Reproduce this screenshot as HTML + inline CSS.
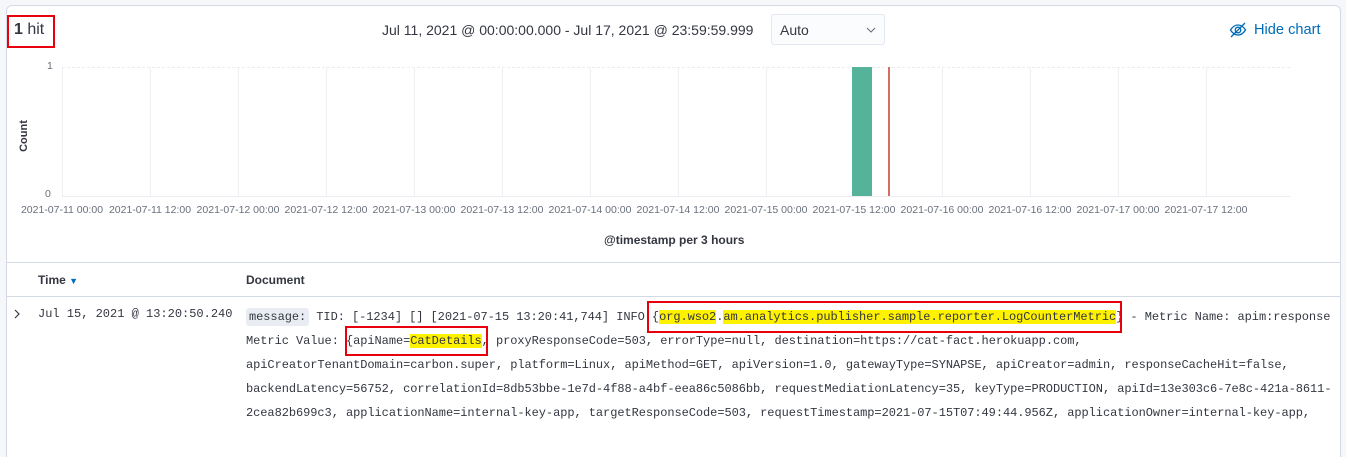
<!DOCTYPE html>
<html style="height:457px;overflow:hidden"><head><meta charset="utf-8"><style>
*{margin:0;padding:0;box-sizing:border-box}
body{width:1346px;height:457px;overflow:hidden;background:#f5f7fa;font-family:"Liberation Sans",sans-serif;color:#343741;position:relative}
.panel{position:absolute;left:6px;top:5px;width:1335px;height:452px;background:#fff;border:1px solid #d3dae6;border-bottom:none;border-radius:6px 6px 0 0}
.abs{position:absolute}
.mono{font-family:"Liberation Mono",monospace;font-size:12px;color:#343741;white-space:nowrap}
.hl{background:#fff200}
.red{position:absolute;border:2px solid #e8000d}
.xl{position:absolute;top:204px;font-size:10.5px;color:#69707d;white-space:nowrap;transform:translateX(-50%)}
.gl{position:absolute;top:67px;height:129px;width:1px;background:#eef0f3}
</style></head><body>
<div class="panel"></div>
<div class="abs" style="left:14px;top:21px;font-size:16px;"><b>1</b> hit</div>
<div class="red" style="left:7px;top:15px;width:48px;height:33px"></div>
<div class="abs" style="left:382px;top:22px;font-size:14px;">Jul 11, 2021 @ 00:00:00.000 - Jul 17, 2021 @ 23:59:59.999</div>
<div class="abs" style="left:771px;top:14px;width:114px;height:31px;border:1px solid #e3e8ef;border-radius:3px;background:#fbfcfd;font-size:14px;padding:7px 0 0 8px">Auto<svg class="abs" style="left:94px;top:12px" width="10" height="7" viewBox="0 0 10 7"><path d="M1 1l4 4 4-4" fill="none" stroke="#69707d" stroke-width="1.1"/></svg></div>
<svg class="abs" style="left:1229px;top:21px" width="18" height="18" viewBox="0 0 18 18" fill="none" stroke="#006bb8" stroke-width="1.3"><path d="M1.5 9C4 5 6.5 4 9 4s5 1 7.5 5C14 13 11.5 14 9 14S4 13 1.5 9z"/><circle cx="9" cy="9" r="2.8"/><path d="M2 16L16 2"/></svg>
<div class="abs" style="left:1254px;top:22px;font-size:14.6px;color:#006bb8">Hide chart</div>
<div class="abs" style="left:47px;top:60px;font-size:10.5px;color:#69707d">1</div>
<div class="abs" style="left:45px;top:188px;font-size:10.5px;color:#69707d">0</div>
<div class="abs" style="left:8px;top:130px;font-size:11px;font-weight:bold;transform:rotate(-90deg);transform-origin:center">Count</div>
<div class="abs" style="left:62px;top:67px;width:1228px;height:0;border-top:1px dashed #e9ecf0"></div>
<div class="abs" style="left:62px;top:196px;width:1228px;height:1px;background:#e9ecf0"></div>
<div class="gl" style="left:62px"></div><div class="gl" style="left:150px"></div><div class="gl" style="left:238px"></div><div class="gl" style="left:326px"></div><div class="gl" style="left:414px"></div><div class="gl" style="left:502px"></div><div class="gl" style="left:590px"></div><div class="gl" style="left:678px"></div><div class="gl" style="left:766px"></div><div class="gl" style="left:942px"></div><div class="gl" style="left:1030px"></div><div class="gl" style="left:1118px"></div><div class="gl" style="left:1206px"></div>
<div class="abs" style="left:852px;top:67px;width:20px;height:129px;background:#54b399"></div>
<div class="abs" style="left:888px;top:67px;width:2px;height:129px;background:#d36f62"></div>
<div class="xl" style="left:62px">2021-07-11 00:00</div><div class="xl" style="left:150px">2021-07-11 12:00</div><div class="xl" style="left:238px">2021-07-12 00:00</div><div class="xl" style="left:326px">2021-07-12 12:00</div><div class="xl" style="left:414px">2021-07-13 00:00</div><div class="xl" style="left:502px">2021-07-13 12:00</div><div class="xl" style="left:590px">2021-07-14 00:00</div><div class="xl" style="left:678px">2021-07-14 12:00</div><div class="xl" style="left:766px">2021-07-15 00:00</div><div class="xl" style="left:854px">2021-07-15 12:00</div><div class="xl" style="left:942px">2021-07-16 00:00</div><div class="xl" style="left:1030px">2021-07-16 12:00</div><div class="xl" style="left:1118px">2021-07-17 00:00</div><div class="xl" style="left:1206px">2021-07-17 12:00</div>
<div class="abs" style="left:604px;top:233px;font-size:12px;font-weight:bold">@timestamp per 3 hours</div>
<div class="abs" style="left:7px;top:262px;width:1333px;height:1px;background:#d3dae6"></div>
<div class="abs" style="left:7px;top:296px;width:1333px;height:1px;background:#d3dae6"></div>
<div class="abs" style="left:38px;top:273px;font-size:12px;font-weight:bold">Time <span style="color:#006bb8;font-size:9px">&#9660;</span></div>
<div class="abs" style="left:246px;top:273px;font-size:12px;font-weight:bold">Document</div>
<svg class="abs" style="left:13px;top:309px" width="8" height="10" viewBox="0 0 8 10"><path d="M2 1l4 4-4 4" fill="none" stroke="#343741" stroke-width="1.2"/></svg>
<div class="abs mono" style="left:38px;top:307px">Jul 15, 2021 @ 13:20:50.240</div>
<div class="abs mono" style="left:246px;top:305px;line-height:24px;letter-spacing:-0.06px">
<div><span style="background:#e9edf3;padding:2px 3px;border-radius:3px">message:</span> TID: [-1234] [] [2021-07-15 13:20:41,744] INFO {<span class="hl">org.wso2</span>.<span class="hl">am.analytics.publisher.sample.reporter.LogCounterMetric</span>} - Metric Name: apim:response</div>
<div>Metric Value: {apiName=<span class="hl">CatDetails</span>, proxyResponseCode=503, errorType=null, destination=https://cat-fact.herokuapp.com,</div>
<div>apiCreatorTenantDomain=carbon.super, platform=Linux, apiMethod=GET, apiVersion=1.0, gatewayType=SYNAPSE, apiCreator=admin, responseCacheHit=false,</div>
<div>backendLatency=56752, correlationId=8db53bbe-1e7d-4f88-a4bf-eea86c5086bb, requestMediationLatency=35, keyType=PRODUCTION, apiId=13e303c6-7e8c-421a-8611-</div>
<div>2cea82b699c3, applicationName=internal-key-app, targetResponseCode=503, requestTimestamp=2021-07-15T07:49:44.956Z, applicationOwner=internal-key-app,</div>
</div>
<div class="red" style="left:647px;top:301px;width:475px;height:32px"></div>
<div class="red" style="left:345px;top:326px;width:143px;height:30px"></div>
</body></html>
